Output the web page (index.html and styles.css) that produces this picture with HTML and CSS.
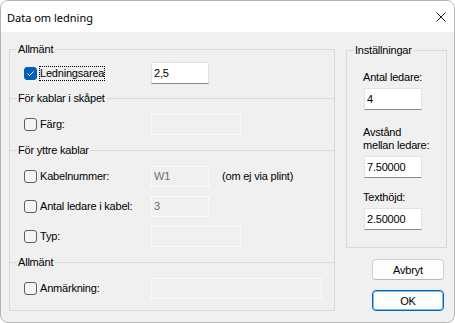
FILE: index.html
```html
<!DOCTYPE html>
<html lang="sv">
<head>
  <meta charset="UTF-8">
  <meta name="viewport" content="width=device-width, initial-scale=1.0">
  <title>Data om ledning</title>
  <link rel="stylesheet" href="styles.css">
</head>
<body>
  <div class="window">
    <div class="titlebar">
      <span class="title">Data om ledning</span>
      <svg class="close" width="10" height="10" viewBox="0 0 10 10">
        <path d="M0.5 0.5 L9.5 9.5 M9.5 0.5 L0.5 9.5" stroke="#1b1b1b" stroke-width="1" fill="none"/>
      </svg>
    </div>

    <div class="content">
      <!-- Left group box with its sections -->
      <div class="group main">
        <div class="section">
          <div class="legend"><span>Allmänt</span></div>
          <div class="row">
            <label class="check">
              <span class="box checked">
                <svg width="11" height="11" viewBox="0 0 11 11"><path d="M2.5 5.5 L4.5 7.5 L8.5 3.5" stroke="#fff" stroke-width="1" fill="none"/></svg>
              </span>
              <span class="text focus">Ledningsarea</span>
            </label>
            <input class="edit small" type="text" value="2,5">
          </div>
        </div>

        <div class="section">
          <div class="legend"><span>För kablar i skåpet</span></div>
          <div class="row">
            <label class="check"><span class="box"></span><span class="text">Färg:</span></label>
            <input class="edit medium" type="text" value="" disabled>
          </div>
        </div>

        <div class="section">
          <div class="legend"><span>För yttre kablar</span></div>
          <div class="row">
            <label class="check"><span class="box"></span><span class="text">Kabelnummer:</span></label>
            <input class="edit small" type="text" value="W1" disabled>
            <span class="note">(om ej via plint)</span>
          </div>
          <div class="row">
            <label class="check"><span class="box"></span><span class="text">Antal ledare i kabel:</span></label>
            <input class="edit small" type="text" value="3" disabled>
          </div>
          <div class="row">
            <label class="check"><span class="box"></span><span class="text">Typ:</span></label>
            <input class="edit medium" type="text" value="" disabled>
          </div>
        </div>

        <div class="section">
          <div class="legend"><span>Allmänt</span></div>
          <div class="row">
            <label class="check"><span class="box"></span><span class="text">Anmärkning:</span></label>
            <input class="edit wide" type="text" value="" disabled>
          </div>
        </div>
      </div>

      <!-- Right column: settings and buttons -->
      <div class="side">
        <div class="group settings">
          <div class="legend"><span>Inställningar</span></div>
          <div class="field">
            <div class="field-label">Antal ledare:</div>
            <input class="edit small" type="text" value="4">
          </div>
          <div class="field">
            <div class="field-label">Avstånd<br>mellan ledare:</div>
            <input class="edit small" type="text" value="7.50000">
          </div>
          <div class="field">
            <div class="field-label">Texthöjd:</div>
            <input class="edit small" type="text" value="2.50000">
          </div>
        </div>
        <div class="buttons">
          <button>Avbryt</button>
          <button class="default">OK</button>
        </div>
      </div>
    </div>
  </div>
</body>
</html>
```

FILE: styles.css
```css
body {
  margin: 0;
  background: #fff;
  font-family: "Liberation Sans", Arial, sans-serif;
  font-size: 11px;
  letter-spacing: -0.2px;
  color: #000;
}

.window {
  width: 455px;
  height: 323px;
  box-sizing: border-box;
  border: 1px solid #b4b4b4;
  border-radius: 8px;
  overflow: hidden;
  background: #f0f0f0;
  display: flex;
  flex-direction: column;
}

/* Title bar */
.titlebar {
  height: 31px;
  flex: none;
  background: #fff;
  display: flex;
  align-items: center;
  justify-content: space-between;
  padding: 0 8px 0 6px;
}

.title {
  font-family: "Noto Sans", sans-serif;
  font-size: 11px;
  letter-spacing: 0;
  color: #000;
  margin-top: 1px;
}

.close {
  display: block;
  margin-top: 1px;
}

.content {
  display: flex;
  gap: 11px;
  padding: 10px 7px 0 8px;
}

/* Group boxes */
.group {
  border: 1px solid #d9d9d9;
  border-top: none;
}

.legend {
  display: flex;
  align-items: center;
  height: 14px;
  margin: 0 -1px;
  white-space: nowrap;
}

.legend::before,
.legend::after {
  content: "";
  height: 1px;
  background: #d9d9d9;
}

.legend::before {
  width: 8px;
}

.legend::after {
  flex: 1;
}

.legend span {
  line-height: 14px;
  padding: 0 2px 0 1px;
}

.main {
  width: 326px;
  box-sizing: border-box;
  margin-top: 7px;
}

.main .section:first-child .legend,
.settings .legend {
  margin-top: -7px;
}

.section {
  padding-bottom: 8px;
}

.section:first-child {
  padding-bottom: 7px;
}

.section:last-child {
  padding-bottom: 11px;
}

.row {
  display: flex;
  align-items: center;
  height: 22px;
  margin-top: 8px;
  padding-left: 14px;
}

.section:first-child .row {
  margin-top: 6px;
}

.check {
  display: flex;
  align-items: center;
  width: 127px;
  flex: none;
}

.box {
  width: 13px;
  height: 13px;
  box-sizing: border-box;
  border: 1px solid #5d5d5d;
  border-radius: 3px;
  background: #f5f5f5;
  display: flex;
  align-items: center;
  justify-content: center;
}

.box.checked {
  background: #005fb8;
  border-color: #005fb8;
}

.box svg {
  display: block;
}

.text {
  margin-left: 3px;
  line-height: 13px;
}

.text.focus {
  outline: 1px dotted #000;
}

/* Edit fields */
.edit {
  font-family: "Liberation Sans", Arial, sans-serif;
  font-size: 11px;
  letter-spacing: -0.2px;
  color: #000;
  height: 22px;
  box-sizing: border-box;
  margin: 0;
  padding: 0 2px;
  background: #fff;
  border: 1px solid #e3e3e3;
  border-bottom-color: #8b8b8b;
  border-radius: 0;
  outline: none;
}

.edit:disabled {
  height: 21px;
  background: #f0f0f0;
  border: 1px solid #fbfbfb;
  color: #6d6d6d;
}

.small {
  width: 58px;
}

.medium {
  width: 90px;
}

.wide {
  width: 171px;
}

.note {
  margin-left: 13px;
}

/* Right column */
.side {
  width: 101px;
  display: flex;
  flex-direction: column;
}

.settings {
  margin-top: 8px;
  padding-bottom: 17px;
}

.field {
  padding-left: 16px;
  margin-top: 16px;
}

.field:nth-child(2) {
  margin-top: 14px;
}

.field:nth-child(4) {
  margin-top: 13px;
}

.field-label {
  line-height: 13px;
  margin-bottom: 4px;
}

.field .edit {
  display: block;
  margin-left: 1px;
}

.buttons {
  display: flex;
  flex-direction: column;
  align-items: flex-end;
  gap: 10px;
  margin-top: 11px;
  margin-right: 3px;
}

button {
  width: 72px;
  height: 21px;
  padding: 0;
  font-family: "Liberation Sans", Arial, sans-serif;
  font-size: 11px;
  letter-spacing: -0.2px;
  color: #000;
  background: #fdfdfd;
  border: 1px solid #d0d0d0;
  border-bottom-color: #b8b8b8;
  border-radius: 4px;
}

button.default {
  border: 1px solid #0067c0;
  box-shadow: inset 0 0 0 1px rgba(0, 103, 192, 0.45);
}
```
